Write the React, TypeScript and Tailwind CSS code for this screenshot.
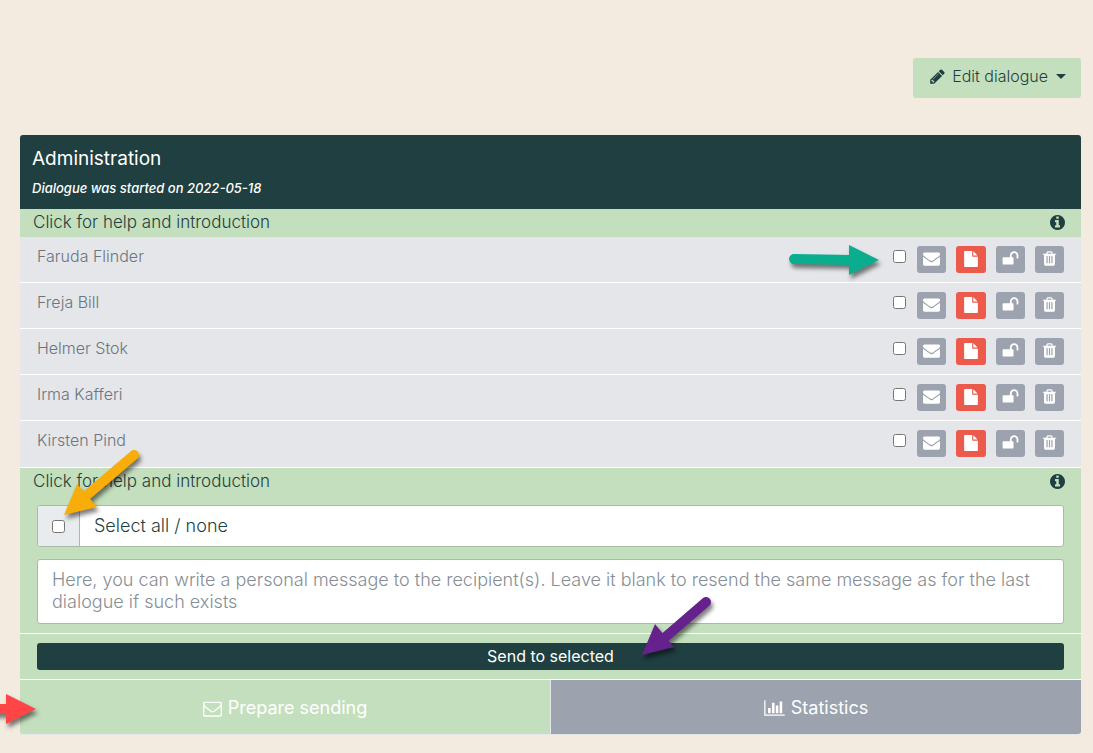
import React, { useState } from 'react';

interface IconProps {
  name: keyof typeof ICONS;
  className?: string;
}

const ICONS = {
  pencil: {
    box: '0 0 1792 1792',
    d: 'M491 1536l91-91-235-235-91 91v107h128v128h107zm523-928q0-22-22-22-10 0-17 7l-542 542q-7 7-7 17 0 22 22 22 10 0 17-7l542-542q7-7 7-17zm-54-192l416 416-832 832h-416v-416zm683 96q0 53-37 90l-166 166-416-416 166-165q36-38 90-38 53 0 91 38l235 234q37 39 37 91z',
  },
  info: {
    box: '128 128 1536 1536',
    d: 'M1152 1376v-160q0-14-9-23t-23-9h-96v-512q0-14-9-23t-23-9h-320q-14 0-23 9t-9 23v160q0 14 9 23t23 9h96v320h-96q-14 0-23 9t-9 23v160q0 14 9 23t23 9h448q14 0 23-9t9-23zm-128-896v-160q0-14-9-23t-23-9h-192q-14 0-23 9t-9 23v160q0 14 9 23t23 9h192q14 0 23-9t9-23zm640 416q0 209-103 385.5t-279.5 279.5-385.5 103-385.5-103-279.5-279.5-103-385.5 103-385.5 279.5-279.5 385.5-103 385.5 103 279.5 279.5 103 385.5z',
  },
  envelope: {
    box: '0 0 1792 1792',
    d: 'M1792 710v794q0 66-47 113t-113 47h-1472q-66 0-113-47t-47-113v-794q44 49 101 87 362 246 497 345 57 42 92.5 65.5t94.5 48 110 24.5h2q51 0 110-24.5t94.5-48 92.5-65.5q170-123 498-345 57-39 100-87zm0-294q0 79-49 151t-122 123q-376 261-468 325-10 7-42.5 31t-54 38.5-52 32.5-57.5 27-50 9h-2q-23 0-50-9t-57.5-27-52-32.5-54-38.5-42.5-31q-91-64-262-182.5t-205-142.5q-62-42-117-115.5t-55-136.5q0-78 41.5-130t118.5-52h1472q65 0 112.5 47t47.5 113z',
  },
  envelopeOutline: {
    box: '0 0 1792 1792',
    d: 'M1664 1504v-768q-32 36-69 66-268 206-426 338-51 43-83 67t-86.5 48.5-102.5 24.5h-2q-48 0-102.5-24.5t-86.5-48.5-83-67q-158-132-426-338-37-30-69-66v768q0 13 9.5 22.5t22.5 9.5h1472q13 0 22.5-9.5t9.5-22.5zm0-1051v-24.5l-.5-13-3-12.5-5.5-9-9-7.5-14-2.5h-1472q-13 0-22.5 9.5t-9.5 22.5q0 168 147 284 193 152 401 317 6 5 35 29.5t46 37.5 44.5 31.5 50.5 27.5 43 9h2q20 0 43-9t50.5-27.5 44.5-31.5 46-37.5 35-29.5q208-165 401-317 54-43 100.5-115.5t46.5-131.5zm128-37v1088q0 66-47 113t-113 47h-1472q-66 0-113-47t-47-113v-1088q0-66 47-113t113-47h1472q66 0 113 47t47 113z',
  },
  file: {
    box: '0 0 1792 1792',
    d: 'M1152 512v-472q22 14 36 28l408 408q14 14 28 36h-472zm-128 32q0 40 28 68t68 28h544v1056q0 40-28 68t-68 28h-1344q-40 0-68-28t-28-68v-1600q0-40 28-68t68-28h800v544z',
  },
  unlock: {
    box: '0 0 1792 1792',
    d: 'M1728 576v256q0 26-19 45t-45 19h-64q-26 0-45-19t-19-45v-256q0-106-75-181t-181-75-181 75-75 181v192h96q40 0 68 28t28 68v576q0 40-28 68t-68 28h-960q-40 0-68-28t-28-68v-576q0-40 28-68t68-28h672v-192q0-185 131.5-316.5t316.5-131.5 316.5 131.5 131.5 316.5z',
  },
  trash: {
    box: '0 0 1792 1792',
    d: 'M704 1376v-704q0-14-9-23t-23-9h-64q-14 0-23 9t-9 23v704q0 14 9 23t23 9h64q14 0 23-9t9-23zm256 0v-704q0-14-9-23t-23-9h-64q-14 0-23 9t-9 23v704q0 14 9 23t23 9h64q14 0 23-9t9-23zm256 0v-704q0-14-9-23t-23-9h-64q-14 0-23 9t-9 23v704q0 14 9 23t23 9h64q14 0 23-9t9-23zm-544-992h448l-48-117q-7-9-17-11h-317q-10 2-17 11zm928 32v64q0 14-9 23t-23 9h-96v948q0 83-47 143.5t-113 60.5h-832q-66 0-113-58.5t-47-141.5v-952h-96q-14 0-23-9t-9-23v-64q0-14 9-23t23-9h309l70-167q15-37 54-63t79-26h320q40 0 79 26t54 63l70 167h309q14 0 23 9t9 23z',
  },
  chart: {
    box: '0 0 2048 1792',
    d: 'M640 896v512h-256v-512h256zm384-512v1024h-256v-1024h256zm1024 1152v128h-2048v-1536h128v1408h1920zm-640-896v768h-256v-768h256zm384-384v1152h-256v-1152h256z',
  },
};

const Icon: React.FC<IconProps> = ({ name, className }) => (
  <svg viewBox={ICONS[name].box} fill="currentColor" className={className} aria-hidden="true">
    <path d={ICONS[name].d} />
  </svg>
);

interface ArrowProps {
  width: number;
  height: number;
  shaft: string;
  head: string;
  className: string;
}

const Arrow: React.FC<ArrowProps> = ({ width, height, shaft, head, className }) => (
  <svg
    width={width}
    height={height}
    aria-hidden="true"
    className={`pointer-events-none absolute z-10 overflow-visible drop-shadow-[2px_4px_2px_rgba(0,0,0,0.5)] ${className}`}
  >
    <path d={shaft} stroke="currentColor" strokeWidth="10" strokeLinecap="round" />
    <path d={head} fill="currentColor" />
  </svg>
);

const HelpBar: React.FC = () => (
  <button type="button" className="flex h-7 w-full items-center justify-between bg-[#c4dfbd] pr-4 pb-0.5 pl-[13px] text-left text-[17px] leading-6 font-light text-[#1f3f40]">
    <span>Click for help and introduction</span>
    <Icon name="info" className="size-[15px]" />
  </button>
);

const people = ['Faruda Flinder', 'Freja Bill', 'Helmer Stok', 'Irma Kafferi', 'Kirsten Pind'];

const iconButton = 'flex h-[27px] w-[29px] items-center justify-center rounded-[3px] bg-[#9ca2ae] pb-0.5 text-white';

export default function App() {
  const [selected, setSelected] = useState<string[]>([]);
  const [message, setMessage] = useState('');

  const toggle = (name: string) =>
    setSelected(selected.includes(name) ? selected.filter(n => n !== name) : [...selected, name]);

  return (
    <div className="min-h-screen overflow-x-hidden bg-[#f4ebe0] pt-[58px] pr-3 pb-[18px] pl-5 font-['Inter',sans-serif]">
      <div className="flex justify-end">
        <button type="button" className="flex h-10 items-center rounded-[3px] bg-[#c4dfbd] pr-[15px] pb-1 pl-4 text-base font-light text-[#1f3f40]">
          <Icon name="pencil" className="mr-1.5 size-[17px]" />
          Edit dialogue
          <span className="ml-2 border-x-[5px] border-t-[5px] border-x-transparent border-t-[#1f3f40]" />
        </button>
      </div>

      <main className="relative mt-[37px] rounded-[3px]">
        <header className="h-[74px] rounded-t-[3px] bg-[#1f3f40] px-3 pt-[13px] text-white">
          <h1 className="text-[19px] leading-[22px]">Administration</h1>
          <p className="mt-[7px] text-[13px] leading-[22px] font-medium italic">Dialogue was started on 2022-05-18</p>
        </header>
        <HelpBar />

        <div className="relative">
          <ul>
            {people.map(name => (
              <li key={name} className="flex h-[46px] justify-between border-b border-white bg-[#e5e6ea] px-[17px] last:h-[47px]">
                <label htmlFor={name} className="pt-[7px] text-base leading-6 font-light text-[#6c757d]">{name}</label>
                <div className="flex items-start pt-[9px]">
                  <input
                    id={name}
                    type="checkbox"
                    checked={selected.includes(name)}
                    onChange={() => toggle(name)}
                    className="mt-1 mr-[11px] size-[13px]"
                  />
                  <div className="flex gap-2.5">
                    <button type="button" aria-label="Send mail" className={iconButton}>
                      <Icon name="envelope" className="size-[17px]" />
                    </button>
                    <button type="button" aria-label="Open document" className="flex h-[27px] w-[30px] items-center justify-center rounded-[3px] bg-[#eb5a4b] pb-0.5 text-white">
                      <Icon name="file" className="size-4" />
                    </button>
                    <button type="button" aria-label="Unlock" className={iconButton}>
                      <Icon name="unlock" className="size-[17px]" />
                    </button>
                    <button type="button" aria-label="Delete" className={iconButton}>
                      <Icon name="trash" className="size-[17px]" />
                    </button>
                  </div>
                </div>
              </li>
            ))}
          </ul>
          <Arrow
            width={92}
            height={30}
            shaft="M6 14L64 15"
            head="M61 0L91 15L61 30Z"
            className="top-2 right-[201px] text-[#0aae8e]"
          />
        </div>

        <section className="border-b border-white bg-[#c4dfbd] pb-[9px]">
          <HelpBar />
          <div className="relative mx-[17px] mt-[9px] flex h-[42px] rounded-[3px] border border-[#a5bda4] bg-white">
            <div className="flex w-[42px] items-center justify-center rounded-l-[2px] border-r border-[#a5bda4] bg-[#e9ecef]">
              <input
                id="select-all"
                type="checkbox"
                checked={selected.length === people.length}
                onChange={e => setSelected(e.target.checked ? people : [])}
                className="size-[13px]"
              />
            </div>
            <label htmlFor="select-all" className="flex flex-1 items-center pl-3.5 text-lg font-light text-[#1f3f40]">
              Select all / none
            </label>
            <Arrow
              width={76}
              height={66}
              shaft="M96 -51L49 -11"
              head="M26 9L39 -22L59 1Z"
              className="top-0 left-0 text-[#f9ad0b]"
            />
          </div>
          <textarea
            aria-label="Personal message"
            value={message}
            onChange={e => setMessage(e.target.value)}
            placeholder="Here, you can write a personal message to the recipient(s). Leave it blank to resend the same message as for the last dialogue if such exists"
            className="mx-[17px] mt-3 block h-[65px] w-[calc(100%-34px)] resize-none rounded-[3px] border border-[#a5bda4] bg-white px-3.5 py-[9px] text-lg leading-[22px] font-light placeholder:text-[#868e96]"
          />
        </section>

        <section className="relative border-b border-white bg-[#c4dfbd] px-[17px] py-[9px]">
          <button type="button" className="block h-[27px] w-full rounded-[3px] bg-[#1f3f40] pb-0.5 text-base leading-6 text-white">
            Send to selected
          </button>
          <Arrow
            width={70}
            height={60}
            shaft="M64 5L20 43"
            head="M0 58L13 27L32 50Z"
            className="-top-[37px] left-[calc(50%+91px)] text-[#66228c]"
          />
        </section>

        <nav className="relative flex border-b border-[#e5e6ea] text-lg text-white">
          <button type="button" className="flex h-[54px] flex-1 items-center justify-center gap-1.5 rounded-bl-[3px] border-r border-[#e5e6ea] bg-[#c4dfbd] pt-0.5">
            <Icon name="envelopeOutline" className="size-[19px]" />
            Prepare sending
          </button>
          <button type="button" className="flex h-[54px] flex-1 items-center justify-center gap-1.5 rounded-br-[3px] bg-[#9ca2ae] pt-0.5">
            <Icon name="chart" className="h-[18px] w-[21px]" />
            Statistics
          </button>
          <Arrow
            width={42}
            height={30}
            shaft="M-6 15L8 15"
            head="M6 0L36 15L6 30Z"
            className="top-3.5 -left-5 text-[#ff4545]"
          />
        </nav>
      </main>
    </div>
  );
}
